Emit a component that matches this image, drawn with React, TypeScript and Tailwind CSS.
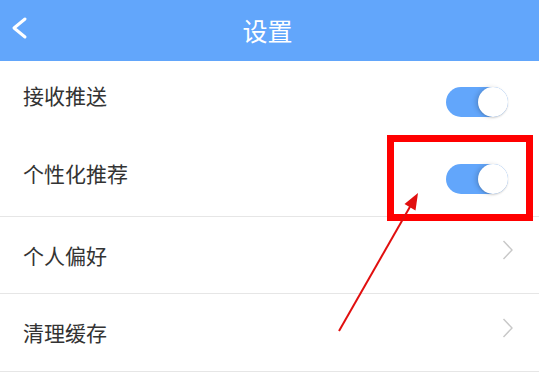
function Toggle() {
  return (
    <div className="relative h-[30px] w-[62px] rounded-full bg-[#62a6fb]">
      <div className="absolute right-0 top-0 h-[30px] w-[30px] rounded-full bg-white shadow-[-3px_0_4px_rgba(0,0,0,0.12),0_1px_2px_rgba(0,0,0,0.15)]" />
    </div>
  )
}

function Chevron() {
  return (
    <svg className="mb-[10px]" width="12" height="20" viewBox="0 0 12 20" fill="none">
      <polyline points="1.5,1 10,10 1.5,19" stroke="#c8c8c8" strokeWidth="1.4" />
    </svg>
  )
}

const font = { fontFamily: '"Noto Sans CJK SC", "Noto Sans", sans-serif' }

export default function App() {
  return (
    <div className="relative h-[381px] w-[539px] overflow-hidden bg-white" style={font}>
      <header className="relative flex h-[61px] items-center justify-center bg-[#62a6fb]">
        <svg className="absolute left-[10px] top-[16px]" width="18" height="24" viewBox="0 0 18 24" fill="none">
          <polyline points="15,3 4,12 15,21" stroke="white" strokeWidth="3" strokeLinecap="round" strokeLinejoin="round" />
        </svg>
        <h1 className="text-[25px] leading-none text-white -translate-x-[2px]">设置</h1>
      </header>

      <div className="flex h-[78px] items-center justify-between pl-[23px] pr-[31px]">
        <span className="mb-[9px] text-[21px] leading-none text-[#333]">接收推送</span>
        <div className="mt-[3px]"><Toggle /></div>
      </div>
      <div className="flex h-[78px] items-center justify-between border-b border-[#e6e6e6] pl-[23px] pr-[31px]">
        <span className="mb-[9px] text-[21px] leading-none text-[#333]">个性化推荐</span>
        <div className="mt-[3px]"><Toggle /></div>
      </div>
      <div className="flex h-[77px] items-center justify-between border-b border-[#e6e6e6] pl-[23px] pr-[25px]">
        <span className="text-[21px] leading-none text-[#333]">个人偏好</span>
        <Chevron />
      </div>
      <div className="flex h-[78px] items-center justify-between border-b border-[#e6e6e6] pl-[23px] pr-[25px]">
        <span className="text-[21px] leading-none text-[#333]">清理缓存</span>
        <Chevron />
      </div>

      <div className="absolute left-[387px] top-[135px] h-[86px] w-[146px] border-[7px] border-[#f00]" />
      <svg className="absolute left-0 top-0" width="539" height="381" viewBox="0 0 539 381">
        <line x1="339" y1="331" x2="411" y2="205" stroke="#e10f0f" strokeWidth="2" />
        <polygon points="418,193 415.5,210.5 404.5,204" fill="#e10f0f" />
      </svg>
    </div>
  )
}
